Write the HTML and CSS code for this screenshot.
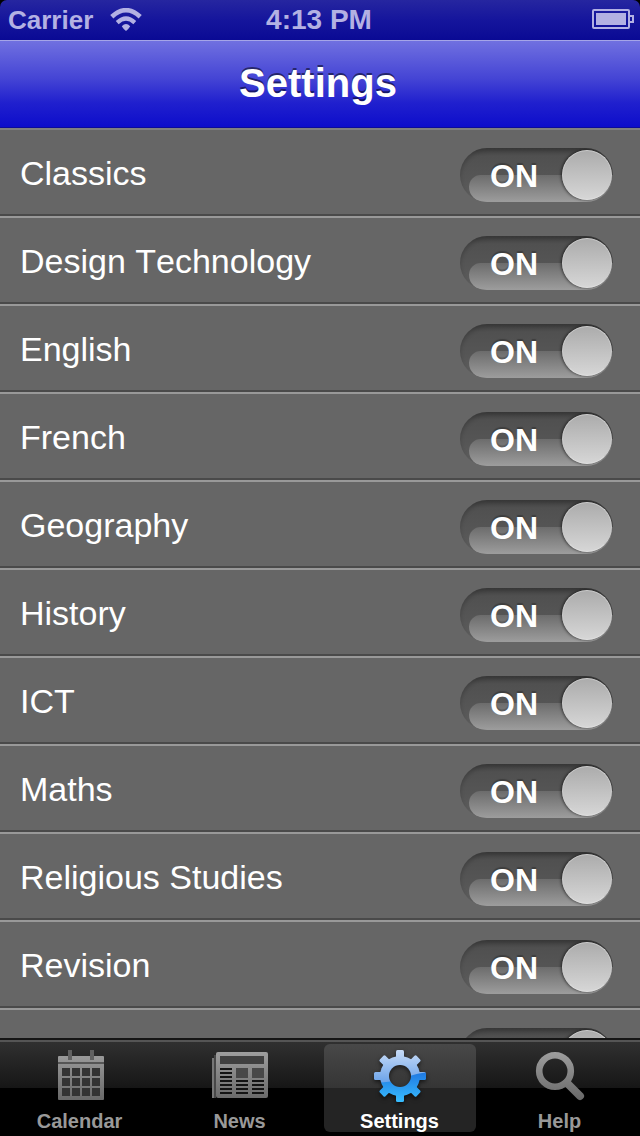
FILE: index.html
```html
<!DOCTYPE html>
<html lang="en">
<head>
    <meta charset="UTF-8">
    <meta name="viewport" content="width=device-width, initial-scale=1.0">
    <title>Settings</title>
    <link rel="stylesheet" href="styles.css">
</head>
<body>
    <div class="screen">
        <header class="status-bar">
            <div class="carrier">
                <span>Carrier</span>
                <svg class="wifi" width="32" height="24" viewBox="0 0 32 24">
                    <path d="M1.8 8.8 Q16 -4.4 30.2 8.8" fill="none" stroke="#b3b1e3" stroke-width="4.6"/>
                    <path d="M7.2 14.6 Q16 6.4 24.8 14.6" fill="none" stroke="#b3b1e3" stroke-width="4.2"/>
                    <path d="M11.8 18.2 Q16 13.8 20.2 18.2 Q19 20.5 16 23 Q13 20.5 11.8 18.2 Z" fill="#b3b1e3"/>
                </svg>
            </div>
            <div class="time">4:13 PM</div>
            <div class="battery">
                <svg width="43" height="22" viewBox="0 0 43 22">
                    <rect x="1" y="1" width="36" height="18" rx="1" fill="none" stroke="#b3b1e3" stroke-width="2"/>
                    <rect x="4" y="4" width="30" height="12" fill="#b3b1e3"/>
                    <path d="M38 7 H41 V13 H38" fill="none" stroke="#b3b1e3" stroke-width="2"/>
                </svg>
            </div>
        </header>

        <header class="nav-bar">
            <h1>Settings</h1>
        </header>

        <main class="list">
            <div class="row"><span>Classics</span><div class="switch"><b>ON</b><i class="knob"></i></div></div>
            <div class="row"><span>Design Technology</span><div class="switch"><b>ON</b><i class="knob"></i></div></div>
            <div class="row"><span>English</span><div class="switch"><b>ON</b><i class="knob"></i></div></div>
            <div class="row"><span>French</span><div class="switch"><b>ON</b><i class="knob"></i></div></div>
            <div class="row"><span>Geography</span><div class="switch"><b>ON</b><i class="knob"></i></div></div>
            <div class="row"><span>History</span><div class="switch"><b>ON</b><i class="knob"></i></div></div>
            <div class="row"><span>ICT</span><div class="switch"><b>ON</b><i class="knob"></i></div></div>
            <div class="row"><span>Maths</span><div class="switch"><b>ON</b><i class="knob"></i></div></div>
            <div class="row"><span>Religious Studies</span><div class="switch"><b>ON</b><i class="knob"></i></div></div>
            <div class="row"><span>Revision</span><div class="switch"><b>ON</b><i class="knob"></i></div></div>
            <div class="row"><span></span><div class="switch"><i class="knob"></i></div></div>
        </main>

        <footer class="tab-bar">
            <a class="tab">
                <svg width="60" height="60" viewBox="1 0 60 60">
                    <defs>
                        <linearGradient id="grey" gradientUnits="userSpaceOnUse" x1="0" y1="4" x2="0" y2="56">
                            <stop offset="0" stop-color="#a0a0a0"/>
                            <stop offset="1" stop-color="#666"/>
                        </linearGradient>
                    </defs>
                    <rect x="9" y="10" width="46" height="44" rx="1" fill="url(#grey)"/>
                    <path fill="#333" d="M13 22h8v8h-8z M23 22h8v8h-8z M33 22h8v8h-8z M43 22h8v8h-8z
                        M13 32h8v8h-8z M23 32h8v8h-8z M33 32h8v8h-8z M43 32h8v8h-8z
                        M13 42h8v8h-8z M23 42h8v8h-8z M33 42h8v8h-8z M43 42h8v8h-8z"/>
                    <path d="M9 16h46v2H9z" fill="#565656"/>
                    <path d="M19 4h4v10h-4z M41 4h4v10h-4z" fill="#616161"/>
                </svg>
                <span>Calendar</span>
            </a>
            <a class="tab">
                <svg width="60" height="60" viewBox="0 0 60 60">
                    <path d="M2 12h2v40H2z" fill="#777"/>
                    <path d="M4 9h2v43H4z" fill="#484848"/>
                    <rect x="6" y="6" width="52" height="46" rx="2" fill="url(#grey)"/>
                    <path d="M10 10h44v8H10z" fill="#404040"/>
                    <path d="M26 22h12v10H26z M42 22h12v10H42z" fill="#484848"/>
                    <path d="M10 22h12v2H10z M10 26h12v2H10z M10 30h12v2H10z M10 34h12v2H10z M10 38h12v2H10z M10 42h12v2H10z M10 46h12v2H10z
                        M26 34h12v2H26z M26 38h12v2H26z M26 42h12v2H26z M26 46h12v2H26z
                        M42 34h12v2H42z M42 38h12v2H42z M42 42h12v2H42z M42 46h12v2H42z" fill="#141414"/>
                </svg>
                <span>News</span>
            </a>
            <a class="tab active">
                <svg class="gear" width="60" height="60" viewBox="1 0 60 60">
                    <defs>
                        <linearGradient id="blueTop" x1="0" y1="0" x2="0" y2="1">
                            <stop offset="0" stop-color="#d3e2f8"/>
                            <stop offset="1" stop-color="#69a2e9"/>
                        </linearGradient>
                        <linearGradient id="blueBottom" gradientUnits="userSpaceOnUse" x1="0" y1="24" x2="0" y2="56">
                            <stop offset="0" stop-color="#1d73df"/>
                            <stop offset="1" stop-color="#38bdff"/>
                        </linearGradient>
                        <mask id="gearShape">
                            <g fill="#fff">
                                <circle cx="31" cy="30" r="20"/>
                                <rect x="27" y="4" width="8" height="52" rx="1.5"/>
                                <rect x="27" y="4" width="8" height="52" rx="1.5" transform="rotate(45 31 30)"/>
                                <rect x="27" y="4" width="8" height="52" rx="1.5" transform="rotate(90 31 30)"/>
                                <rect x="27" y="4" width="8" height="52" rx="1.5" transform="rotate(135 31 30)"/>
                            </g>
                            <circle cx="31" cy="30" r="11" fill="#000"/>
                        </mask>
                    </defs>
                    <g mask="url(#gearShape)">
                        <rect width="61" height="60" fill="url(#blueBottom)"/>
                        <path d="M0 0 H61 V26 Q48 27 38 31 Q24 37 0 37 Z" fill="url(#blueTop)"/>
                    </g>
                </svg>
                <span>Settings</span>
            </a>
            <a class="tab">
                <svg width="60" height="60" viewBox="0 0 60 60">
                    <circle cx="25" cy="25" r="15.8" fill="none" stroke="url(#grey)" stroke-width="6.6"/>
                    <path d="M37 37 L50 50" fill="none" stroke="url(#grey)" stroke-width="8" stroke-linecap="round"/>
                </svg>
                <span>Help</span>
            </a>
        </footer>
    </div>
</body>
</html>
```
FILE: styles.css
```css
body {
    margin: 0;
    background-color: #000;
    font-family: "Liberation Sans", Arial, Helvetica, sans-serif;
    font-kerning: none;
}
.screen {
    display: flex;
    flex-direction: column;
    width: 640px;
    height: 1136px;
    overflow: hidden;
}

/* status bar */
.status-bar {
    display: grid;
    grid-template-columns: 1fr auto 1fr;
    height: 40px;
    box-sizing: border-box;
    padding: 0 6px 0 8px;
    border-radius: 7px 7px 0 0;
    background: linear-gradient(#2626a0, #15159c 50%, #0a0a94);
    color: #b3b1e3;
    font-size: 26px;
    font-weight: bold;
    line-height: 40px;
}
.carrier {
    display: flex;
    gap: 17px;
}
.wifi {
    margin-top: 8px;
}
.time {
    padding-right: 4px;
    font-size: 28px;
}
.battery {
    display: flex;
    justify-content: flex-end;
    padding-top: 9px;
}
.battery svg {
    margin-right: -1px;
}

/* title */
.nav-bar {
    height: 88px;
    box-sizing: border-box;
    border-top: 1px solid #a5a5e8;
    border-bottom: 1px solid #0c0c99;
    background: linear-gradient(#7070e0, #4545d5 43%, #2020ce 72%, #0d0dcb);
}
h1 {
    margin: 0;
    padding-right: 4px;
    color: #fff;
    font-size: 40px;
    line-height: 84px;
    text-align: center;
    text-shadow: 0 -2px 0 rgba(0, 0, 0, 0.5);
}

/* subject list */
.list {
    height: 910px;
    overflow: hidden;
    background-color: #666;
}
.row {
    display: flex;
    justify-content: space-between;
    height: 88px;
    box-sizing: border-box;
    border-top: 2px solid #999;
    border-bottom: 2px solid #4a4a4a;
    padding: 0 27px 0 20px;
    color: #fff;
    font-size: 34px;
    line-height: 87px;
}
.row:first-child {
    border-top-color: #808080;
}
.switch {
    display: flex;
    justify-content: space-between;
    align-items: center;
    position: relative;
    width: 153px;
    height: 54px;
    box-sizing: border-box;
    margin-top: 18px;
    padding: 0 1px 0 30px;
    overflow: hidden;
    border-radius: 27px;
    background: linear-gradient(#434343, #505050 15%, #565656 60%, #606060);
    box-shadow: inset 0 3px 4px rgba(0, 0, 0, 0.2);
}
/* glossy lower half of the track */
.switch::before {
    content: "";
    position: absolute;
    left: 9px;
    right: 0;
    bottom: 0;
    height: 27px;
    border-radius: 14px 0 0 18px;
    background: linear-gradient(#6c6c6c, #9d9d9d);
}
.switch b {
    position: relative;
    font-size: 32px;
    line-height: 54px;
    padding-top: 2px;
    text-shadow: 0 -2px 1px rgba(0, 0, 0, 0.25);
}
.knob {
    position: relative;
    width: 50px;
    height: 50px;
    box-sizing: border-box;
    margin-left: auto;
    border: 1px solid #cdcdcd;
    border-bottom-color: #e0e0e0;
    border-radius: 50%;
    background: linear-gradient(#acacac, #d6d6d6);
    box-shadow: -1px 0 3px rgba(0, 0, 0, 0.6);
}

/* tab bar */
.tab-bar {
    display: flex;
    gap: 8px;
    height: 98px;
    box-sizing: border-box;
    padding: 4px;
    border-top: 2px solid #151515;
    background: linear-gradient(#555 2px, #303030 2px, #161616 48px, #000 48px);
}
.tab {
    display: flex;
    flex-direction: column;
    align-items: center;
    width: 152px;
    height: 88px;
    border-radius: 6px;
    color: #999;
    font-size: 20px;
    font-weight: bold;
}
.tab svg {
    flex-shrink: 0;
    margin-top: 2px;
}
.tab span {
    line-height: 24px;
    margin-top: 3px;
    padding-right: 1px;
}
.tab.active {
    color: #fff;
    background: linear-gradient(#484848, #353535 44px, #242424 44px);
}
.gear {
    filter: drop-shadow(0 2px 2px rgba(0, 0, 0, 0.6));
}
```
